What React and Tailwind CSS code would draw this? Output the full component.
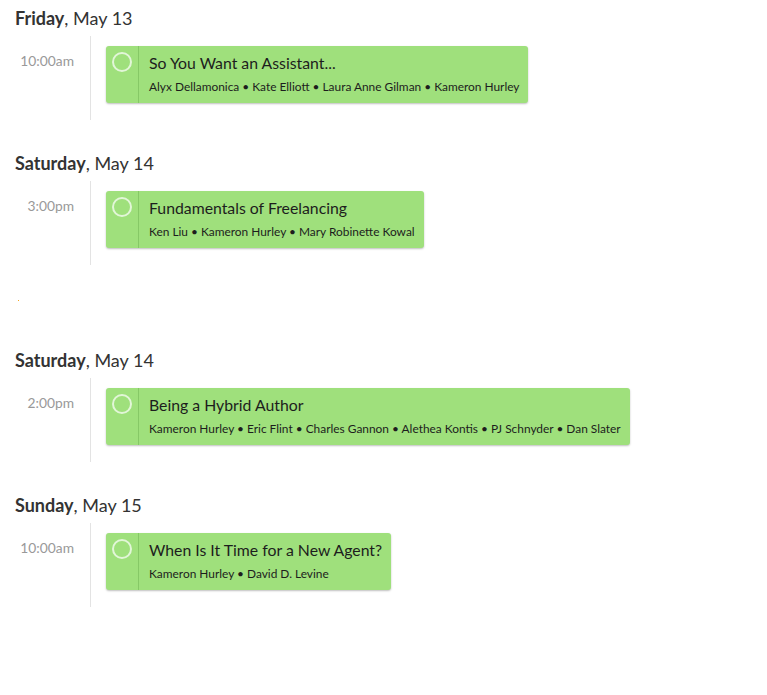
import React from 'react';

const days = [
  {
    day: 'Friday',
    date: 'May 13',
    time: '10:00am',
    title: 'So You Want an Assistant...',
    people: ['Alyx Dellamonica', 'Kate Elliott', 'Laura Anne Gilman', 'Kameron Hurley'],
  },
  {
    day: 'Saturday',
    date: 'May 14',
    time: '3:00pm',
    title: 'Fundamentals of Freelancing',
    people: ['Ken Liu', 'Kameron Hurley', 'Mary Robinette Kowal'],
  },
  {
    day: 'Saturday',
    date: 'May 14',
    time: '2:00pm',
    title: 'Being a Hybrid Author',
    people: ['Kameron Hurley', 'Eric Flint', 'Charles Gannon', 'Alethea Kontis', 'PJ Schnyder', 'Dan Slater'],
  },
  {
    day: 'Sunday',
    date: 'May 15',
    time: '10:00am',
    title: 'When Is It Time for a New Agent?',
    people: ['Kameron Hurley', 'David D. Levine'],
  },
];

function Session({ item }) {
  return (
    <div className="inline-flex rounded-[3px] bg-[#9fe07c] shadow-[0_1px_2px_rgba(0,0,0,0.25)]">
      <div className="flex w-[33px] shrink-0 justify-center border-r border-[#86c866] pt-[6px]">
        <div className="h-[20px] w-[20px] rounded-full border-2 border-white/70" />
      </div>
      <div className="pl-[10px] pr-[9px] pt-[7px] pb-[8px]">
        <div className="text-[15.8px] leading-[20px] text-[#1d1d1d]">{item.title}</div>
        <div className="mt-[6px] text-[11.9px] leading-[16px] text-[#1d1d1d]">{item.people.join(' • ')}</div>
      </div>
    </div>
  );
}

function Day({ item }) {
  return (
    <div>
      <h2 className="pl-[15px] text-[18px] leading-[24px] text-[#333]">
        <span className="font-bold">{item.day}</span>, {item.date}
      </h2>
      <div className="mt-[6px] flex">
        <div className="w-[91px] shrink-0 border-r border-[#e3e3e3] pr-[16px] pt-[17px] text-right text-[13.8px] leading-[16px] text-[#999]">
          {item.time}
        </div>
        <div className="pl-[15px] pt-[10px] pb-[17px]">
          <Session item={item} />
        </div>
      </div>
    </div>
  );
}

export default function App() {
  return (
    <div className="min-h-[695px] bg-white pt-[6px] font-['Lato','Liberation_Sans',sans-serif]">
      <Day item={days[0]} />
      <div className="mt-[31px]">
        <Day item={days[1]} />
      </div>
      <div className="h-[83px] pl-[18px] pt-[35px]">
        <div className="h-px w-px bg-[#f5a623]" />
      </div>
      <Day item={days[2]} />
      <div className="mt-[31px]">
        <Day item={days[3]} />
      </div>
    </div>
  );
}
